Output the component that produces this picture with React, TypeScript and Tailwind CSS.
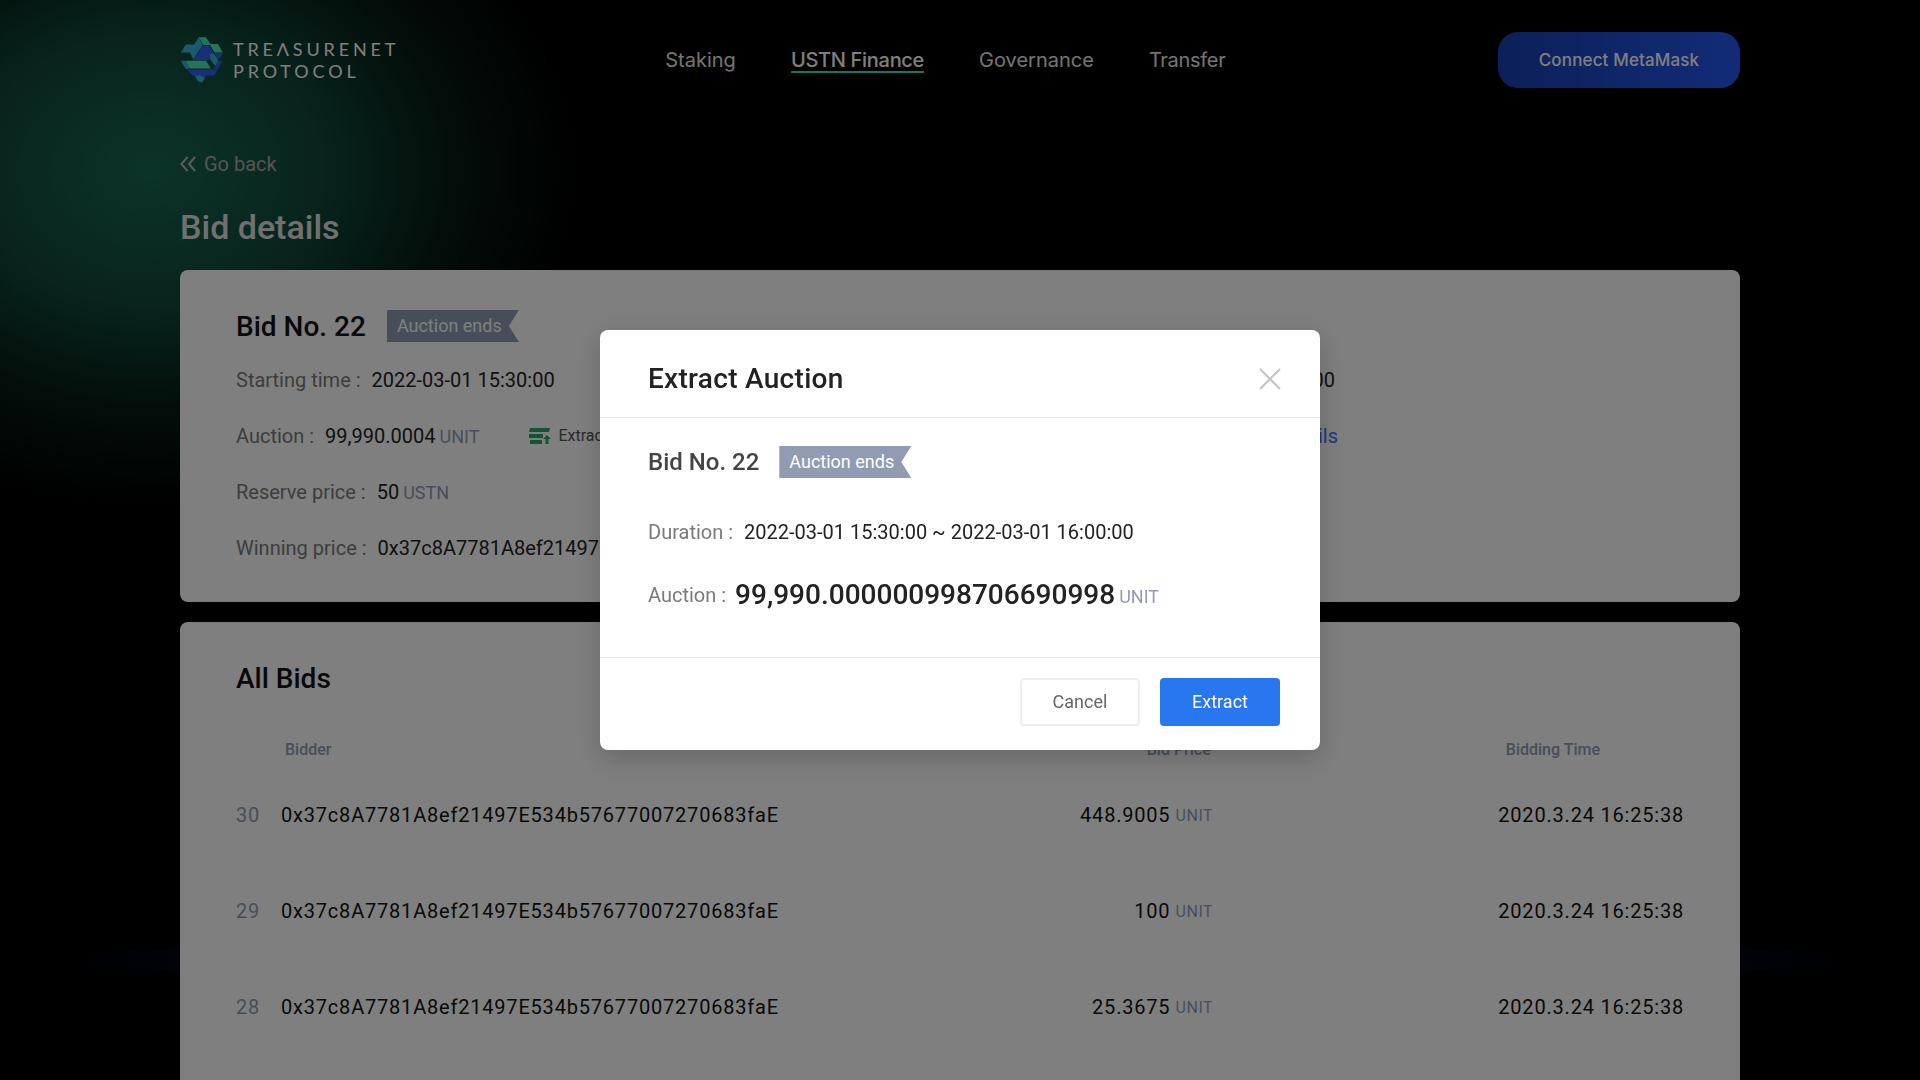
const font = "font-['Roboto',sans-serif]";
const navFont = "font-['Inter',sans-serif]";

const bids = [
  { no: 30, price: "448.9005" },
  { no: 29, price: "100" },
  { no: 28, price: "25.3675" },
];

const address = "0x37c8A7781A8ef21497E534b57677007270683faE";

function Logo() {
  return (
    <svg width="44" height="46" viewBox="24 26 128 137" className="shrink-0">
      <polygon points="90,52 110,52 123,73 108,95 62,95" fill="#2f60f0" />
      <polygon points="78,27 90,50 62,93 52,72 25,72 40,48 65,48" fill="#36b4d8" />
      <polygon points="78,27 100,27 113,47 136,47 150,72 125,72 112,50 92,50" fill="#48e8b4" />
      <polygon points="125,74 150,74 142,90 133,90" fill="#2f60f0" />
      <polygon points="113,76 124,76 137,97 128,112 112,93" fill="#36b4d8" />
      <polygon points="137,97 150,97 135,121 122,121" fill="#2f60f0" />
      <polygon points="38,97 100,97 114,120 52,120" fill="#48e8b4" />
      <polygon points="25,97 38,97 52,120 40,122" fill="#36b4d8" />
      <polygon points="42,123 135,123 124,141 100,141 88,162 75,141 62,141" fill="#2f60f0" />
      <polygon points="66,141 84,141 96,148 88,162 76,158" fill="#36b4d8" />
    </svg>
  );
}

function Ribbon() {
  return (
    <span className="inline-flex h-8 w-[132px] items-center bg-[#919cb3] pl-2.5 text-lg text-white [clip-path:polygon(0_0,100%_0,calc(100%-10px)_50%,100%_100%,0_100%)]">
      Auction ends
    </span>
  );
}

function Field({ label, children }: { label: string; children: React.ReactNode }) {
  return (
    <div className="flex h-14 items-center text-xl whitespace-nowrap">
      <span className="mr-[11px] text-[#7a7a7a]">{label}</span>
      {children}
    </div>
  );
}

export default function App() {
  return (
    <div className={`relative h-screen overflow-hidden bg-black bg-[radial-gradient(ellipse_430px_340px_at_150px_170px,#186850_0%,#10483a_40%,#061c14_70%,#000_100%),radial-gradient(ellipse_920px_40px_at_960px_960px,#030818_80%,#000_100%)] bg-blend-lighten ${font}`}>
      <div className="mx-auto w-[1560px]">
        <header className="flex h-[120px] items-center">
          <div className="flex items-center gap-[9px]">
            <Logo />
            <div className="text-[18px] leading-[22px] tracking-[3.85px] text-white font-['Lato',sans-serif]">
              <div>TREΛSURENET</div>
              <div>PROTOCOL</div>
            </div>
          </div>
          <nav className={`ml-[266px] flex gap-[55px] text-xl text-[#e8e8e8] ${navFont}`}>
            <a className="h-[26px] leading-[26px]">Staking</a>
            <a className="h-[26px] border-b-2 border-[#38e8bc] leading-[26px] font-medium tracking-[-0.3px] text-white">USTN Finance</a>
            <a className="h-[26px] leading-[26px]">Governance</a>
            <a className="h-[26px] leading-[26px] tracking-[-0.3px]">Transfer</a>
          </nav>
          <button className={`ml-auto h-14 w-[242px] rounded-[20px] bg-gradient-to-r from-[#1840b0] to-[#2458f0] pt-0.5 text-[17px] font-medium tracking-[0.15px] text-white ${navFont}`}>
            Connect MetaMask
          </button>
        </header>

        <a className="mt-[28px] flex h-8 items-center gap-[8px] text-xl text-[#aaa]">
          <svg width="16" height="16" viewBox="0 0 16 16" fill="none" stroke="#b0b0b0" strokeWidth="2.2">
            <path d="M7.5 1 1.5 8l6 7M15 1 9 8l6 7" />
          </svg>
          Go back
        </a>
        <h1 className="mt-[27px] text-[34px] leading-10 font-medium text-[#e0e0e0]">Bid details</h1>

        <section className="mt-[23px] h-[332px] rounded-lg bg-white px-14 pt-[35px]">
          <div className="flex h-11 items-center">
            <span className="text-[28px] font-medium text-[#111]">Bid No. 22</span>
            <span className="-mt-[2px] ml-[21px] flex"><Ribbon /></span>
          </div>
          <div className="mt-[3px] flex justify-between">
            <div>
              <Field label="Starting time :">
                <span className="text-[#222]">2022-03-01 15:30:00</span>
              </Field>
              <Field label="Auction :">
                <span className="text-[#222]">99,990.0004</span>
                <span className="mt-0.5 ml-1 text-lg text-[#919cb3]">UNIT</span>
                <span className="ml-[50px] flex items-center gap-[7px] text-base text-[#555]">
                  <svg width="22" height="16" viewBox="0 0 22 16" fill="#2aa66f">
                    <path d="M1 0h20l-1 4H0zM0 6h14v4H0zM1 12h12v4H1zM18 7l4 4h-2.5v5h-3v-5H14z" />
                  </svg>
                  Extract
                </span>
              </Field>
              <Field label="Reserve price :">
                <span className="text-[#222]">50</span>
                <span className="mt-0.5 ml-1 text-lg text-[#919cb3]">USTN</span>
              </Field>
              <Field label="Winning price :">
                <span className="text-[#222]">{address}</span>
              </Field>
            </div>
            <div className="mr-[346px] flex flex-col items-end">
              <div className="mr-[3px]">
                <Field label="Ending time :">
                  <span className="text-[#222]">2022-03-01 16:00:00</span>
                </Field>
              </div>
              <div className="flex h-14 items-center text-xl text-[#3c6eff]">Transaction details</div>
            </div>
          </div>
        </section>

        <section className="mt-5 h-[600px] rounded-lg bg-white px-14 pt-[37px]">
          <h2 className="text-[28px] leading-10 font-medium text-[#111]">All Bids</h2>
          <div className="mt-[39px] flex h-6 items-center text-base font-medium text-[#919cb3]">
            <span className="ml-[49px]">Bidder</span>
            <span className="mr-[295px] ml-auto">Bid Price</span>
            <span className="mr-[84px]">Bidding Time</span>
          </div>
          <div className="mt-[5px]">
            {bids.map((b) => (
              <div key={b.no} className="flex h-24 items-center text-xl tracking-[0.8px] text-[#111]">
                <span className="w-[45px] text-[#919cb3]">{b.no}</span>
                <span>{address}</span>
                <span className="ml-auto text-right">{b.price}</span>
                <span className="mt-0.5 mr-[285px] ml-[5px] text-base tracking-[0.6px] text-[#919cb3]">UNIT</span>
                <span>2020.3.24 16:25:38</span>
              </div>
            ))}
          </div>
        </section>
      </div>

      <div className="fixed inset-0 bg-black/50">
        <div className="absolute top-[330px] left-[600px] flex h-[420px] w-[720px] flex-col rounded-lg bg-white shadow-[0_8px_28px_rgba(0,0,0,0.2)]">
          <div className="flex h-[88px] items-center justify-between border-b border-[#e8e8e8] pt-[10px] pr-[39px] pl-12">
            <h3 className="text-[28px] tracking-[0.3px] font-medium text-[#222]">Extract Auction</h3>
            <svg width="22" height="22" viewBox="0 0 22 22" fill="none" stroke="#c4c4c4" strokeWidth="2">
              <path d="M1 1l20 20M21 1 1 21" />
            </svg>
          </div>
          <div className="flex-1 px-12 pt-7">
            <div className="flex h-8 items-center">
              <span className="text-2xl font-medium text-[#444]">Bid No. 22</span>
              <span className="ml-5 flex"><Ribbon /></span>
            </div>
            <div className="mt-[38px] flex h-8 items-center text-xl">
              <span className="mr-[11px] text-[#7a7a7a]">Duration :</span>
              <span className="text-[#222]">2022-03-01 15:30:00 ~ 2022-03-01 16:00:00</span>
            </div>
            <div className="mt-[31px] flex h-8 items-center">
              <span className="mr-[9px] text-xl text-[#7a7a7a]">Auction :</span>
              <span className="text-[28px] font-medium text-[#222]">99,990.000000998706690998</span>
              <span className="mt-1 ml-1 text-lg text-[#919cb3]">UNIT</span>
            </div>
          </div>
          <div className="flex h-[93px] items-start justify-end gap-5 border-t border-[#e8e8e8] pt-5 pr-10">
            <button className="h-12 w-[120px] rounded border-2 border-[#eee] text-lg text-[#666]">Cancel</button>
            <button className="h-12 w-[120px] rounded bg-[#2876f0] text-lg text-white">Extract</button>
          </div>
        </div>
      </div>
    </div>
  );
}
